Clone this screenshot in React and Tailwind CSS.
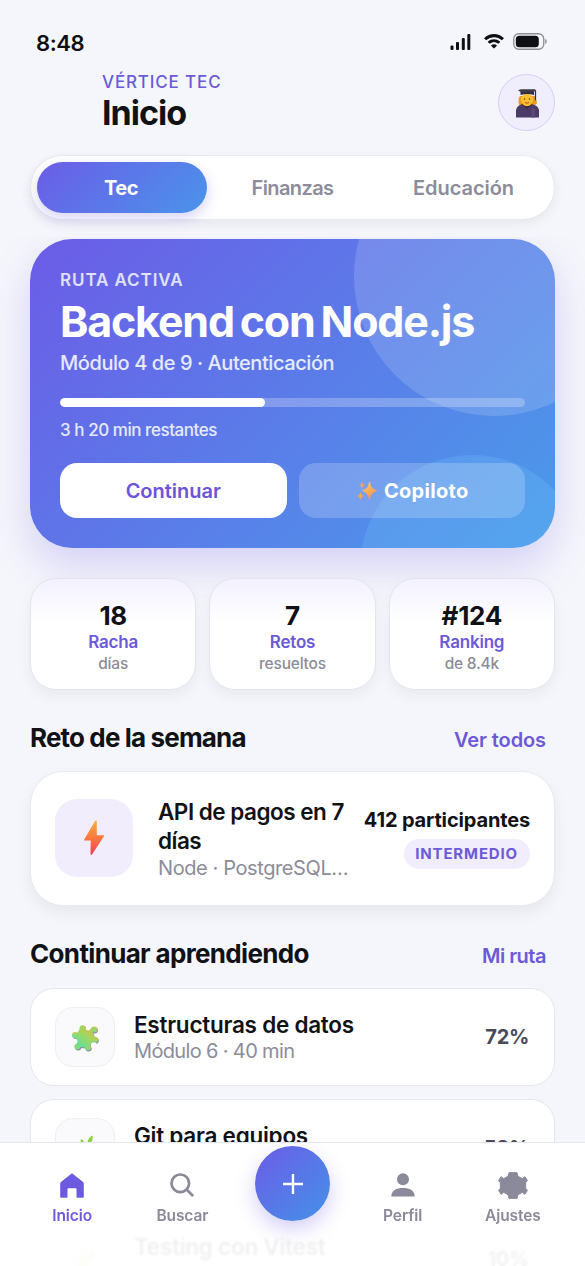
import React from "react";

function StatusBar() {
  return (
    <div className="flex h-[73px] shrink-0 items-start justify-between pl-[36px] pr-[38px] pt-[30px]">
      <span className="text-[22px] font-semibold leading-[26px] tracking-[-0.400px] text-[#101014]">8:48</span>
      <div className="flex items-start pt-[3px] text-[#101014]">
        <svg width="21" height="17" viewBox="0 0 21 17" fill="currentColor">
          <rect x="0.5" y="12.5" width="3" height="4.5" rx="1" />
          <rect x="6" y="9" width="3" height="8" rx="1" />
          <rect x="11.8" y="5" width="3" height="12" rx="1" />
          <rect x="17.3" y="1" width="3" height="16" rx="1" />
        </svg>
        <svg className="ml-[13px] mt-[1px]" width="20" height="15" viewBox="0 0 20 15" fill="currentColor">
          <path d="M10 0C6.200 0 2.800 1.500.3 3.900a.5.5 0 0 0 0 .7l1.500 1.500c.2.200.5.200.7 0A10.700 10.700 0 0 1 10 3.200c2.900 0 5.500 1.100 7.500 2.900.2.200.5.200.7 0l1.500-1.500a.5.5 0 0 0 0-.7A14 14 0 0 0 10 0Z" />
          <path d="M10 5.200c-2.300 0-4.400.9-6 2.300a.5.5 0 0 0 0 .7l1.400 1.400c.2.200.5.200.7 0a6 6 0 0 1 7.800 0c.2.200.5.200.7 0L16 8.200a.5.500 0 0 0 0-.7 9 9 0 0 0-6-2.300Z" />
          <path d="M10 10.300c-1.100 0-2 .4-2.700 1a.5.5 0 0 0 0 .7l2.300 2.300c.2.200.5.200.7 0l2.400-2.300a.5.5 0 0 0 0-.7c-.7-.6-1.600-1-2.700-1Z" />
        </svg>
        <svg className="ml-[9px]" width="34" height="17" viewBox="0 0 34 17" fill="none">
          <rect x="0.750" y="0.750" width="30" height="15.500" rx="5" stroke="#8d8e94" strokeWidth="1.300" />
          <rect x="2.800" y="2.800" width="23" height="11.400" rx="3.500" fill="#101014" />
          <path d="M32.200 5.800c1 .4 1.500 1.400 1.500 2.600s-.5 2.200-1.500 2.600Z" fill="#8d8e94" />
        </svg>
      </div>
    </div>
  );
}

function Graduate() {
  return (
    <svg width="24" height="29" viewBox="0 0 24 29">
      <path d="M5 7c-1.800 2-1.800 6-.8 9.500l3 2h9.600l3.500-2c1.500-3 1-7.500-1-9.500Z" fill="#ee9c1e" />
      <path d="M1 28.500V22c0-3.500 2.500-5.500 5-6.500h12c3.500 1 6 3 6 6.500v6.500Z" fill="#4b3c66" />
      <path d="M6.500 15.500l5.500 4 5.500-4-1-1.500h-9Z" fill="#2c2438" />
      <path d="M16.500 19v9.500H20V20Z" fill="#5d4778" />
      <ellipse cx="12" cy="11" rx="6" ry="6.200" fill="#fdbd30" />
      <circle cx="9.500" cy="10" r=".75" fill="#5a3a20" />
      <circle cx="14.500" cy="10" r=".75" fill="#5a3a20" />
      <path d="M10 13.500q2 1.500 4 0" stroke="#b3541c" fill="none" strokeWidth="1" />
      <path d="M5.500 2.500h13.500v3.500q-6.500-1.800-13.500 0Z" fill="#302c3c" />
      <path d="M3 1.200 6 .3h14l1 1.100-3 1.900H6Z" fill="#3d3a49" />
      <path d="M20.500 1.500v10" stroke="#302c3c" strokeWidth="1.200" />
      <path d="M19.500 11.500h2.300v3.500h-2.300Z" fill="#e89b24" />
    </svg>
  );
}

function Header() {
  return (
    <header className="flex h-[82px] shrink-0 items-start justify-between pl-[102px] pr-[30px]">
      <div className="flex flex-col">
        <span className="text-[17px] font-medium leading-[19px] tracking-[0.850px] text-[#6c5ad8]">VÉRTICE TEC</span>
        <h1 className="text-[34px] font-bold leading-[42px] tracking-[-1px] text-[#111216]">Inicio</h1>
      </div>
      <div className="mt-[0.500px] flex size-[57px] items-center justify-center rounded-full border-[1.500px] border-[#d5cdf8] bg-[#f0edfd] pt-[3px]">
        <Graduate />
      </div>
    </header>
  );
}

function Tabs() {
  return (
    <div className="mx-[30px] flex h-[65px] shrink-0 items-center rounded-full border border-[#e9eaef] bg-white px-[6px] shadow-[0_4px_12px_rgba(20,20,40,0.06)]">
      <div className="flex h-[51px] w-[170px] items-center justify-center rounded-full bg-[linear-gradient(135deg,#6c5ce7,#4a94ea)] pr-[2px] text-[20px] font-bold tracking-[-0.500px] text-white shadow-[0_5px_14px_rgba(108,92,231,0.280)]">Tec</div>
      <div className="flex-1 pl-[1px] text-center text-[20px] font-semibold tracking-[-0.600px] text-[#8c8c9a]">Finanzas</div>
      <div className="flex-1 pl-[2px] text-center text-[20px] font-semibold tracking-[-0.050px] text-[#8c8c9a]">Educación</div>
    </div>
  );
}

function Sparkles() {
  return (
    <svg width="20" height="20" viewBox="0 0 20 20">
      <defs>
        <linearGradient id="spark" x1="0" y1="0" x2="0.500" y2="1">
          <stop offset="0" stopColor="#ffd35a" />
          <stop offset="1" stopColor="#f5925a" />
        </linearGradient>
      </defs>
      <path d="M12.500 1c1 5 2.500 7 7.300 8.700-4.800 1.700-6.300 4-7.300 9-1-5-2.600-7.300-7-9C9.900 8 11.500 6 12.500 1Z" fill="url(#spark)" stroke="url(#spark)" strokeWidth=".8" />
      <path d="M5 1c.3 2 .9 2.700 2.500 3.100C5.900 4.600 5.300 5.300 5 7.200 4.700 5.300 4.100 4.600 2.500 4.100 4.100 3.700 4.700 3 5 1ZM3.500 11.500c.4 2.300 1.100 3 3 3.500-1.900.6-2.600 1.400-3 3.500-.4-2.100-1.100-2.900-3-3.500 1.900-.5 2.600-1.200 3-3.500Z" fill="#f7a55c" stroke="#f7a55c" strokeWidth=".5" />
    </svg>
  );
}

function Hero() {
  return (
    <section className="relative h-[309px] shrink-0 rounded-[42px] shadow-[0_18px_42px_rgba(108,92,231,0.240)]">
      <div className="relative flex h-full flex-col overflow-hidden rounded-[42px] bg-[linear-gradient(135deg,#6c5ce7,#4a9bea)] px-[30px]">
        <div className="absolute left-[324px] top-[-103px] size-[280px] rounded-full bg-white/15" />
        <div className="absolute left-[330px] top-[216px] size-[225px] rounded-full bg-[#7fd0ff]/20" />
        <div className="relative flex flex-col">
          <span className="mt-[30px] text-[17px] font-semibold leading-[22px] tracking-[0.900px] text-white/80">RUTA ACTIVA</span>
          <h2 className="mt-[4px] whitespace-nowrap text-[43px] font-bold leading-[52px] tracking-[-1.200px] text-white [word-spacing:-3px]">Backend con Node.js</h2>
          <span className="mt-[3px] text-[20px] font-medium leading-[26px] tracking-[-0.430px] text-white/85">Módulo 4 de 9 · Autenticación</span>
          <div className="mt-[22px] h-[9px] overflow-hidden rounded-full bg-white/25">
            <div className="h-full w-[44%] rounded-full bg-white" />
          </div>
          <span className="mt-[11px] text-[17px] font-medium leading-[24px] tracking-[-0.450px] text-white/85">3 h 20 min restantes</span>
          <div className="mt-[21px] grid grid-cols-2 gap-[12px]">
            <button className="h-[55px] rounded-[17px] bg-white pt-[2px] text-[20px] font-semibold tracking-[-0.020px] text-[#6c55d9]">Continuar</button>
            <button className="flex h-[55px] items-center justify-center gap-[7px] rounded-[17px] bg-white/20 pl-[2px] pt-[2px] text-[20px] font-bold tracking-[0.300px] text-white">
              <Sparkles />
              Copiloto
            </button>
          </div>
        </div>
      </div>
    </section>
  );
}

function Stat({ value, label, note }) {
  return (
    <div className="flex h-[112px] flex-col items-center rounded-[26px] border-[1.500px] border-[#e4e4ee] bg-linear-to-b from-[#f3f1fe] to-white to-40% pt-[22px] shadow-[0_6px_14px_rgba(20,20,40,0.050)]">
      <span className="text-[26px] font-bold leading-[30px] tracking-[-0.300px] text-[#111216]">{value}</span>
      <span className="text-[17px] font-semibold leading-[23px] tracking-[-0.200px] text-[#6c5ad8]">{label}</span>
      <span className="text-[15.500px] font-medium leading-[20px] tracking-[-0.200px] text-[#8c8c9a]">{note}</span>
    </div>
  );
}

function SectionTitle({ title, link, titleTracking, linkTracking }) {
  return (
    <div className="flex h-[34px] items-center justify-between pr-[9px]">
      <h3 className={"text-[26px] font-bold text-[#111216] " + titleTracking}>{title}</h3>
      <span className={"pt-[4px] text-[20px] font-semibold text-[#6c5ad8] " + linkTracking}>{link}</span>
    </div>
  );
}

function Bolt() {
  return (
    <svg width="22" height="36" viewBox="0 0 22 36">
      <defs>
        <linearGradient id="bolt" x1="0" y1="0" x2="0" y2="1">
          <stop offset="0" stopColor="#fbb03f" />
          <stop offset="0.500" stopColor="#f9793f" />
          <stop offset="1" stopColor="#ee3f55" />
        </linearGradient>
      </defs>
      <path d="M12 1 1.200 19.500c-.3.500 0 1 .5 1h6L7.500 34c0 1 1 1.200 1.500.4L21 16.300c.3-.5 0-1-.6-1h-6.600V1.300c0-1-1.200-1.200-1.800-.3Z" fill="url(#bolt)" />
    </svg>
  );
}

function Challenge() {
  return (
    <section className="flex h-[135px] items-center rounded-[33px] border-[1.500px] border-[#e9eaef] bg-white px-[24px] shadow-[0_7px_16px_rgba(20,20,40,0.060)]">
      <div className="flex size-[78px] shrink-0 items-center justify-center rounded-[22px] bg-[#f1edfd]">
        <Bolt />
      </div>
      <div className="ml-[25px] w-[193px] shrink-0 pt-[4px]">
        <h4 className="text-[22.500px] font-semibold leading-[28.500px] tracking-[-0.500px] text-[#111216]">API de pagos en 7 días</h4>
        <p className="text-[20px] font-normal leading-[27px] tracking-[-0.400px] text-[#8c8c9a]">Node · PostgreSQL…</p>
      </div>
      <div className="flex flex-1 flex-col items-end">
        <span className="whitespace-nowrap text-[20px] font-bold leading-[26px] tracking-[-0.150px] text-[#111216]">412 participantes</span>
        <span className="mt-[6px] flex h-[30px] items-center rounded-full bg-[#f1edfd] pl-[11px] pr-[12px] text-[15px] font-bold tracking-[0.850px] text-[#6c5ad8]">INTERMEDIO</span>
      </div>
    </section>
  );
}

function Puzzle() {
  return (
    <svg className="mt-[3px]" width="30" height="30" viewBox="0 0 30 30">
      <defs>
        <linearGradient id="puzzle" x1="1" y1="0" x2="0.200" y2="1">
          <stop offset="0" stopColor="#ddb944" />
          <stop offset="0.450" stopColor="#a5d65e" />
          <stop offset="1" stopColor="#5edfa0" />
        </linearGradient>
        <g id="puzzle-piece">
          <rect x="8" y="8" width="14" height="14" rx="1.500" transform="rotate(-32 15 15)" />
          <circle cx="12.500" cy="4.800" r="3.200" />
          <circle cx="24.500" cy="6" r="3.200" />
          <circle cx="4.600" cy="12" r="3.200" />
          <circle cx="7" cy="24" r="3.200" />
          <circle cx="18" cy="25" r="3.200" />
          <circle cx="25.500" cy="17" r="3.200" />
          <path d="M10 4.500 22 5l3.500 11.500-7 8.500L7 24.500l-2-12Z" />
        </g>
      </defs>
      <g transform="translate(15 15) scale(0.950) translate(-15 -15)">
        <use href="#puzzle-piece" x="0.800" y="1" fill="#8a86a5" />
        <use href="#puzzle-piece" fill="url(#puzzle)" />
        <circle cx="18.300" cy="4.700" r="2.500" fill="#fafafd" />
        <circle cx="4.800" cy="18.300" r="2.300" fill="#fafafd" />
        <circle cx="24.200" cy="22.500" r="3" fill="#fafafd" />
      </g>
    </svg>
  );
}

function Herb() {
  return (
    <svg width="28" height="30" viewBox="0 0 28 30" fill="#8fd03e">
      <path d="M21.500 2.500c.8 4-.5 7-4.500 9.500-1-4 .5-7.500 4.500-9.500ZM10 6c3 1.500 4 3.500 3 7-3-1-4-4-3-7ZM3 14c5-1 8 1 9 5-5 1-8-1-9-5ZM25 13c0 5-3 7-8 8 0-5 3-8 8-8Z" />
      <path d="M13 29c0-8 1-13 4-18" fill="none" stroke="#5da23a" strokeWidth="2" />
    </svg>
  );
}

function TestTube() {
  return (
    <svg width="30" height="30" viewBox="0 0 30 30">
      <path d="M4 28C7 16 14 10 25 6c-2 12-9 19-21 22Z" fill="#c8e070" />
    </svg>
  );
}

function Lesson({ icon, title, note, percent }) {
  return (
    <div className="flex h-[98px] shrink-0 items-center rounded-[24px] border-[1.500px] border-[#e6e7ec] bg-white pl-[24px] pr-[25px]">
      <div className="flex size-[60px] items-center justify-center rounded-[18px] border-[1.500px] border-[#efeff4] bg-[#fafafd]">{icon}</div>
      <div className="ml-[19px] flex h-[53px] flex-1 flex-col pt-[1px]">
        <h4 className="text-[22.500px] font-semibold leading-[27px] tracking-[-0.250px] text-[#111216]">{title}</h4>
        {note && <p className="text-[20px] leading-[26px] tracking-[-0.650px] text-[#8c8c9a]">{note}</p>}
      </div>
      <span className="text-[20px] font-bold tracking-[-0.300px] text-[#4a4a5a]">{percent}</span>
    </div>
  );
}

function NavItem({ icon, label, active }) {
  return (
    <div className={active ? "flex flex-1 flex-col items-center text-[#6c5ae0]" : "flex flex-1 flex-col items-center text-[#8a8a9b]"}>
      <div className="flex h-[32px] items-center justify-center">{icon}</div>
      <span className="mt-[5px] text-[15.500px] font-semibold leading-[20px] tracking-[-0.100px]">{label}</span>
    </div>
  );
}

function BottomNav() {
  return (
    <nav className="absolute inset-x-0 bottom-0 flex h-[124px] items-start border-t-[1.500px] border-[#e6e7ec] bg-linear-to-b from-white from-60% to-white/94 to-80% px-[17px] backdrop-blur-[1px]">
      <div className="flex flex-1 pt-[26px]">
        <NavItem
          active
          label="Inicio"
          icon={
            <svg width="24" height="25" viewBox="0 0 24 25" fill="currentColor">
              <path d="M12 .3 1.200 8.800c-.7.500-1 1.200-1 2v12.700c0 .9.500 1.300 1.300 1.300H7.500v-8.300c0-.8.400-1.200 1.200-1.200h6.600c.8 0 1.200.4 1.200 1.200v8.300h6c.8 0 1.300-.4 1.300-1.300V10.800c0-.8-.3-1.500-1-2Z" />
            </svg>
          }
        />
        <NavItem
          label="Buscar"
          icon={
            <svg width="24" height="25" viewBox="0 0 24 25" fill="none" stroke="currentColor" strokeWidth="2.700">
              <circle cx="10.300" cy="10.300" r="8.800" />
              <path d="m16.800 16.800 6.300 6.300" />
            </svg>
          }
        />
      </div>
      <div className="flex w-[110px] justify-center pt-[3px]">
        <div className="flex size-[75px] items-center justify-center rounded-full bg-[linear-gradient(135deg,#6c5ce7,#4492e8)] shadow-[0_8px_20px_rgba(108,92,231,0.300)]">
          <svg width="20" height="20" viewBox="0 0 20 20" stroke="white" strokeWidth="2.400">
            <path d="M10 0v20M0 10h20" />
          </svg>
        </div>
      </div>
      <div className="flex flex-1 pt-[26px]">
        <NavItem
          label="Perfil"
          icon={
            <svg width="24" height="24" viewBox="0 0 24 24" fill="currentColor">
              <circle cx="12" cy="6.200" r="6" />
              <path d="M.3 23.500c0-6 5-8.500 11.700-8.500s11.700 2.500 11.700 8.500Z" />
            </svg>
          }
        />
        <NavItem
          label="Ajustes"
          icon={
            <svg width="30" height="27" viewBox="-1 -1 90 81" fill="currentColor" stroke="currentColor" strokeWidth="3" strokeLinejoin="round">
              <path d="M32 1h24l3 11 13 7 8-6 7 12-5 6v17l5 6-7 12-8-6-13 7-3 11H32l-3-11-13-7-8 6-7-12 5-6V31l-5-6 7-12 8 6 13-7Z" />
            </svg>
          }
        />
      </div>
    </nav>
  );
}

export default function App() {
  return (
    <main className="relative flex h-[1266px] w-full flex-col overflow-hidden bg-[#f5f6fb] font-['Inter',sans-serif]">
      <StatusBar />
      <Header />
      <Tabs />
      <div className="mt-[17px] flex flex-1 flex-col overflow-hidden px-[30px] pt-[1.500px]">
        <Hero />
        <div className="relative mt-[30px] grid shrink-0 grid-cols-3 gap-[13px]">
          <Stat value="18" label="Racha" note="días" />
          <Stat value="7" label="Retos" note="resueltos" />
          <Stat value="#124" label="Ranking" note="de 8.4k" />
        </div>
        <div className="mt-[31px] shrink-0">
          <SectionTitle title="Reto de la semana" link="Ver todos" titleTracking="tracking-[-0.850px]" linkTracking="tracking-[-0.100px]" />
        </div>
        <div className="mt-[16px] shrink-0"><Challenge /></div>
        <div className="mt-[31px] shrink-0">
          <SectionTitle title="Continuar aprendiendo" link="Mi ruta" titleTracking="tracking-[-0.660px]" linkTracking="tracking-[-0.500px]" />
        </div>
        <div className="mt-[17px] flex shrink-0 flex-col gap-[13px]">
          <Lesson icon={<Puzzle />} title="Estructuras de datos" note="Módulo 6 · 40 min" percent="72%" />
          <Lesson icon={<Herb />} title="Git para equipos" note="" percent="58%" />
          <Lesson icon={<TestTube />} title="Testing con Vitest" note="" percent="10%" />
        </div>
      </div>
      <BottomNav />
    </main>
  );
}
